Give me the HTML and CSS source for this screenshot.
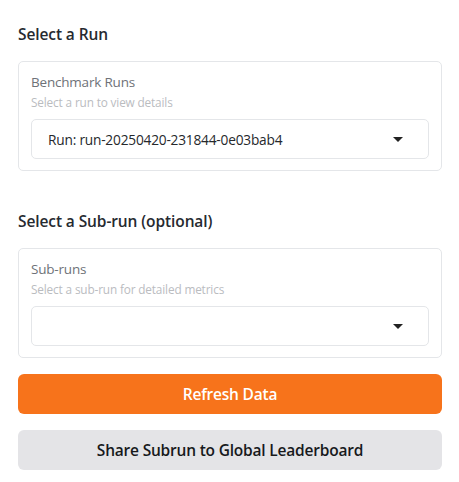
FILE: index.html
```html
<!DOCTYPE html>
<html lang="en">
<head>
<meta charset="utf-8">
<title>Runs</title>
<link rel="stylesheet" href="styles.css">
</head>
<body>
<main class="panel">
  <section class="section">
    <h2 class="heading">Select a Run</h2>
    <div class="card">
      <div class="label">Benchmark Runs</div>
      <div class="hint">Select a run to view details</div>
      <div class="select">
        <span class="select-value">Run: run-20250420-231844-0e03bab4</span>
        <svg class="caret" width="10" height="5" viewBox="0 0 10 5"><path d="M0 0H10L5 5Z" fill="#222"/></svg>
      </div>
    </div>
  </section>
  <section class="section section-sub">
    <h2 class="heading">Select a Sub-run (optional)</h2>
    <div class="card">
      <div class="label">Sub-runs</div>
      <div class="hint">Select a sub-run for detailed metrics</div>
      <div class="select">
        <span class="select-value"></span>
        <svg class="caret" width="10" height="5" viewBox="0 0 10 5"><path d="M0 0H10L5 5Z" fill="#222"/></svg>
      </div>
    </div>
  </section>
  <div class="actions">
    <button class="btn btn-primary">Refresh Data</button>
    <button class="btn btn-secondary">Share Subrun to Global Leaderboard</button>
  </div>
</main>
</body>
</html>
```
FILE: styles.css
```css
* { box-sizing: border-box; }
html, body { margin: 0; padding: 0; background: #ffffff; }
body {
  font-family: "Open Sans", "Noto Sans", sans-serif;
  color: #1f2328;
}
.panel {
  padding: 22px 17px 0 18px;
  display: flex;
  flex-direction: column;
}
.section { display: flex; flex-direction: column; }
.section-sub { margin-top: 38px; }
.heading {
  margin: 0 0 15px 0;
  font-size: 15.5px;
  line-height: 24px;
  font-weight: 600;
  color: #262a30;
  letter-spacing: -0.1px;
}
.card {
  border: 1px solid #e4e6e9;
  border-radius: 5px;
  padding: 12px 12px 11px 12px;
  display: flex;
  flex-direction: column;
}
.label {
  font-size: 13.5px;
  line-height: 16px;
  color: #6e7278;
  letter-spacing: -0.2px;
}
.hint {
  font-size: 11.8px;
  line-height: 14px;
  margin-top: 5px;
  color: #babcbf;
  letter-spacing: -0.15px;
}
.select {
  margin-top: 10px;
  height: 40px;
  border: 1px solid #e4e6e9;
  border-radius: 5px;
  display: flex;
  align-items: center;
  justify-content: space-between;
  padding: 0 25px 0 16px;
}
.select-value {
  font-size: 13.7px;
  color: #25282c;
  letter-spacing: -0.2px;
}
.caret { display: block; }
.actions {
  margin-top: 16px;
  display: flex;
  flex-direction: column;
  gap: 16px;
}
.btn {
  height: 40px;
  border: none;
  border-radius: 6px;
  font-family: "Open Sans", "Noto Sans", sans-serif;
  font-size: 15.5px;
  font-weight: 600;
  letter-spacing: -0.2px;
}
.btn-primary { background: #f7731b; color: #ffffff; }
.btn-secondary { background: #e4e4e7; color: #17191c; }
```
